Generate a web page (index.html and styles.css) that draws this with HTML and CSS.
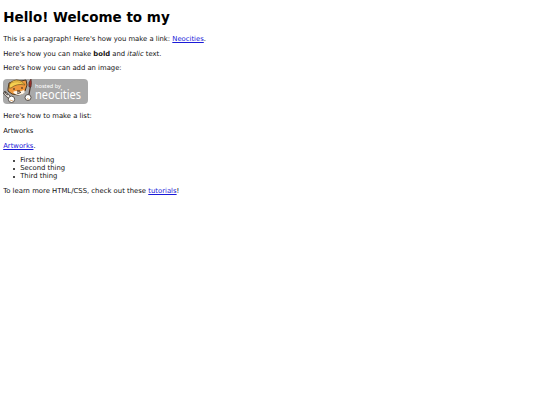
FILE: index.html
```html
<!DOCTYPE html>
<html lang="en">
<head>
<meta charset="utf-8">
<title>Neocities</title>
<link rel="stylesheet" href="styles.css">
</head>
<body>
<h1>Hello! Welcome to my</h1>
<p>This is a paragraph! Here's how you make a link: <a href="#">Neocities</a>.</p>
<p>Here's how you can make <strong>bold</strong> and <em>italic</em> text.</p>
<p>Here's how you can add an image:</p>
<div class="badge">
<svg class="cat" viewBox="0 0 30 25">
<path d="M2 14l6 6" fill="none" stroke="#4b433c" stroke-width="3.4"/>
<path d="M2 14l6 6" fill="none" stroke="#f8f3ec" stroke-width="2"/>
<path d="M0 15l2-3 1 3 2 1" fill="none" stroke="#4b433c" stroke-width="1"/>
<path d="M5 10l1-6 3-1q5-3 9-1l5-1 1 5-2 6q-2 4-7 4-7 0-10-4z" fill="#ee983e" stroke="#4a3722" stroke-width="1"/>
<path d="M6 9q0-7 7-8 6 0 9 5-8-2-14 3z" fill="#f5cf50" stroke="#76531f" stroke-width=".7"/>
<path d="M8 4q7-3 12 1" fill="none" stroke="#b9842d" stroke-width=".6"/>
<path d="M10 13q3-2 6 0l5-2 1 2q-2 3-6 3-4 0-6-3z" fill="#fff5e8"/>
<path d="M11 9v2M19 8v2M14 12h3M14 14q2 1 4-1" stroke="#30231d" stroke-width="1" fill="none"/>
<path d="M27.5 7l-2 11" stroke="#49322a" stroke-width="1.2"/>
<path d="M28 0q1 3 0 8h-2q-1-5 2-8z" fill="#9b2f28" stroke="#472a25" stroke-width=".6"/>
<circle cx="8.5" cy="20.3" r="3.2" fill="#fff" stroke="#4b433c" stroke-width=".9"/>
<circle cx="25" cy="18.5" r="3" fill="#fff" stroke="#4b433c" stroke-width=".9"/>
<path d="M7 21l3 1M24 19.5l2 1" stroke="#e4b27c" stroke-width="1"/>
</svg>
<div class="words"><span class="hosted">hosted by</span><span class="brand">neocities</span></div>
</div>
<p>Here's how to make a list:</p>
<p>Artworks</p>
<p><a href="#">Artworks</a>.</p>
<ul><li>First thing</li><li>Second thing</li><li>Third thing</li></ul>
<p class="more">To learn more HTML/CSS, check out these <a href="#">tutorials</a>!</p>
</body>
</html>
```
FILE: styles.css
```css
body { margin: 9.4px 3.2px; font: 6.83px/8px "DejaVu Sans", sans-serif; color: #111; background: #fff; }
h1 { margin: 0 0 9.5px; font-size: 13.5px; line-height: 16px; color: #000; }
p { margin: 0 0 6.8px; }
.more { font-size: 6.87px; }
a { color: #1a1ad8; text-decoration-thickness: .6px; }
ul { margin: 0 0 6.8px; padding-left: 17px; list-style: none; }
li { display: flex; align-items: center; }
li::before { content: ""; width: 2px; height: 2px; margin: 1px 5.4px 0 -7.4px; border-radius: 50%; background: #111; }
.badge { display: flex; width: 84.6px; height: 25px; margin-bottom: 7.8px; border-radius: 4px; background: #a9a9a9; color: #fff; }
.cat { flex: none; width: 30px; height: 25px; }
.words { display: flex; flex-direction: column; padding: 3.6px 0 0 2.2px; font-family: "Noto Sans", "Open Sans", sans-serif; }
.hosted { font-size: 6px; line-height: 7px; transform: scaleX(.94); transform-origin: left; }
.brand { font-size: 12.5px; line-height: 9px; transform: scaleX(.88); transform-origin: left; }
```
